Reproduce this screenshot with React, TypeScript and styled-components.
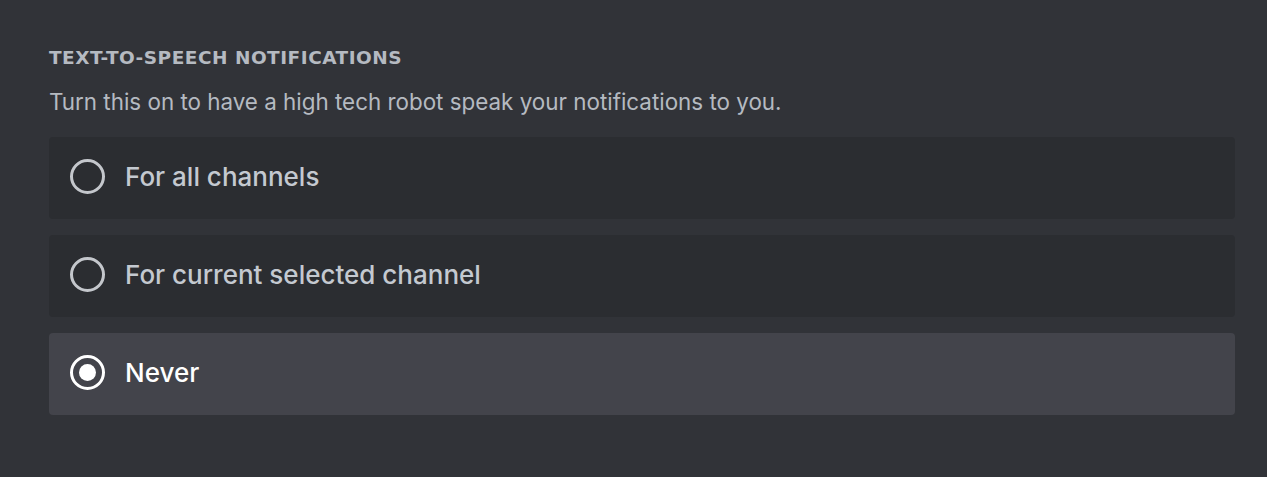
import React, { useState } from "react";
import styled, { createGlobalStyle } from "styled-components";

const Global = createGlobalStyle`
  html, body { margin: 0; padding: 0; background: #313338; }
  body { font-family: Inter, "Noto Sans", sans-serif; }
`;

const Page = styled.div`
  width: 1267px;
  height: 477px;
  box-sizing: border-box;
  background: #313338;
  padding: 47px 32px 0 49px;
`;

const Title = styled.h2`
  margin: 0;
  font-family: "DejaVu Sans", Verdana, sans-serif;
  font-size: 18.5px;
  line-height: 22px;
  font-weight: 700;
  color: #b5bac1;
  letter-spacing: 0.5px;
`;

const Description = styled.p`
  margin: 19px 0 21px 0;
  font-family: Inter, sans-serif;
  font-size: 22.4px;
  line-height: 28px;
  color: #b5bac1;
`;

const Options = styled.div`
  display: flex;
  flex-direction: column;
  gap: 16px;
  width: 1186px;
`;

const Option = styled.label<{ $selected: boolean }>`
  display: flex;
  align-items: center;
  gap: 20px;
  height: 82px;
  box-sizing: border-box;
  padding: 0 0 4px 21px;
  border-radius: 4px;
  background: ${(p) => (p.$selected ? "#43444b" : "#2b2d31")};
  cursor: pointer;
`;

const Radio = styled.span<{ $selected: boolean }>`
  width: 35px;
  height: 35px;
  box-sizing: border-box;
  border-radius: 50%;
  border: 3px solid ${(p) => (p.$selected ? "#ffffff" : "#c4c7cc")};
  display: flex;
  align-items: center;
  justify-content: center;
  flex-shrink: 0;
`;

const Dot = styled.span`
  width: 17px;
  height: 17px;
  border-radius: 50%;
  background: #ffffff;
`;

const Label = styled.span<{ $selected: boolean }>`
  font-family: Inter, sans-serif;
  font-size: 26px;
  font-weight: 500;
  color: ${(p) => (p.$selected ? "#ffffff" : "#c4c9d0")};
`;

const choices = ["For all channels", "For current selected channel", "Never"];

export default function App() {
  const [value, setValue] = useState(2);
  return (
    <>
      <Global />
      <Page>
        <Title>TEXT-TO-SPEECH NOTIFICATIONS</Title>
        <Description>
          Turn this on to have a high tech robot speak your notifications to you.
        </Description>
        <Options>
          {choices.map((c, i) => (
            <Option key={c} $selected={value === i} onClick={() => setValue(i)}>
              <Radio $selected={value === i}>{value === i && <Dot />}</Radio>
              <Label $selected={value === i}>{c}</Label>
            </Option>
          ))}
        </Options>
      </Page>
    </>
  );
}
